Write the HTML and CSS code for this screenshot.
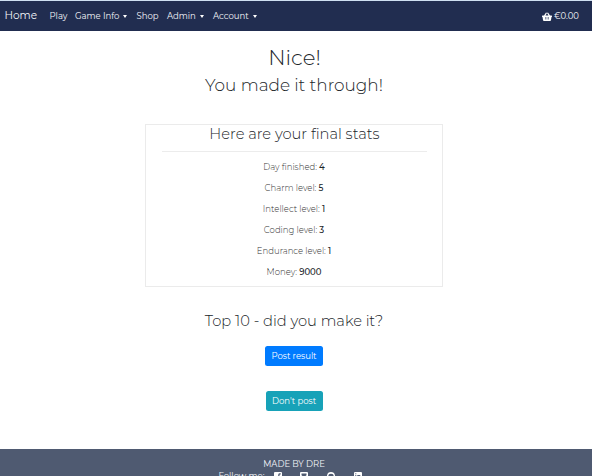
FILE: index.html
```html
<!DOCTYPE html>
<html lang="en">
<head>
<meta charset="utf-8">
<title>Final stats</title>
<link rel="stylesheet" href="styles.css">
</head>
<body>
<nav class="navbar">
  <a class="brand">Home</a>
  <a class="link play">Play</a>
  <a class="link game caret">Game Info</a>
  <a class="link shop">Shop</a>
  <a class="link admin caret">Admin</a>
  <a class="link account caret">Account</a>
  <a class="link cart"><svg class="basket" viewBox="0 0 20 18"><path fill="#fff" fill-rule="evenodd" d="M1 7h3l4-6 2 1-3 5h6l-3-5 2-1 4 6h3q1 0 1 1v1q0 1-1 1l-1 6q0 2-2 2H4q-2 0-2-2L1 10q-1 0-1-1V8q0-1 1-1zM6 10v5h1v-5zm3.500 0v5h1v-5zM13 10v5h1v-5z"/></svg><span>€0.00</span></a>
</nav>
<main class="content">
  <h1 class="title">Nice!</h1>
  <h2 class="subtitle">You made it through!</h2>
  <section class="stats">
    <h3 class="stats-title">Here are your final stats</h3>
    <hr class="rule">
    <p class="stat day">Day finished: <b>4</b></p>
    <p class="stat">Charm level: <b>5</b></p>
    <p class="stat">Intellect level: <b>1</b></p>
    <p class="stat">Coding level: <b>3</b></p>
    <p class="stat">Endurance level: <b>1</b></p>
    <p class="stat">Money: <b>9000</b></p>
  </section>
  <h3 class="top">Top 10 - did you make it?</h3>
  <button class="btn primary">Post result</button>
  <button class="btn info">Don't post</button>
</main>
<footer class="footer">
  <p class="made">MADE BY DRE</p>
  <div class="follow">
    <span>Follow me:</span>
    <svg class="social" viewBox="0 0 8 8"><path fill="#fff" fill-rule="evenodd" d="M1 0h6q1 0 1 1v6q0 1-1 1H5.500V5h1V4h-1V3q0-.6.6-.6h.6V1.300H5.500Q4.200 1.300 4.200 3v1h-1v1h1v3H1Q0 8 0 7V1q0-1 1-1z"/></svg>
    <svg class="social" viewBox="0 0 8 8"><path fill="#fff" fill-rule="evenodd" d="M1 0h6q1 0 1 1v6q0 1-1 1H1Q0 8 0 7V1q0-1 1-1zM1.500 1.600v1.600l2.500 2 2.500-2V1.600z"/></svg>
    <svg class="social" viewBox="0 0 8 8"><path fill="#fff" fill-rule="evenodd" d="M4 0a4 4 0 0 1 1.500 7.700V6.200q1.300-.4 1.300-2 0-2.500-2.800-2.500T1.200 4.200q0 1.600 1.300 2v1.500A4 4 0 0 1 4 0z"/></svg>
    <svg class="social" viewBox="0 0 8 8"><path fill="#fff" fill-rule="evenodd" d="M1 0h6q1 0 1 1v6q0 1-1 1H1Q0 8 0 7V1q0-1 1-1zM1.300 3v4h1V3zm0-1.700v1h1v-1zM3.300 3v4h1V4.200h1V7h1V3z"/></svg>
  </div>
</footer>
</body>
</html>
```
FILE: styles.css
```css
* { box-sizing: border-box; }
body {
  margin: 0;
  height: 476px;
  overflow: hidden;
  background: #fff;
  color: #212529;
  font-family: Montserrat, Inter, "Liberation Sans", sans-serif;
  font-size: 8.5px;
}
h1, h2, h3, p { margin: 0; font-weight: 300; white-space: nowrap; }
.navbar {
  display: flex;
  align-items: center;
  height: 31px;
  padding: 0 13px 0 4.5px;
  border-top: 1px solid #cfe0f2;
  background: #212d50;
  color: #f4f6fa;
  white-space: nowrap;
}
.brand { width: 45px; height: 16px; line-height: 16px; font-size: 10.5px; }
.link { display: flex; align-items: center; height: 16px; }
.play { width: 25.5px; }
.game { width: 61.5px; }
.shop { width: 30.5px; }
.admin { width: 46px; }
.caret::after {
  content: "";
  margin-left: 4px;
  border: 2.5px solid transparent;
  border-width: 3px 2.5px 0;
  border-top-color: #fff;
}
.cart { margin-left: auto; gap: 2px; }
.basket { width: 10px; height: 9px; }
.content {
  display: flex;
  flex-direction: column;
  align-items: center;
  height: 418px;
  padding-top: 12px;
}
.title { height: 28px; margin-right: 3px; line-height: 28px; font-size: 21.3px; }
.subtitle { height: 28px; margin-right: 4px; line-height: 28px; font-size: 16.9px; }
.stats {
  width: 298px;
  height: 163px;
  margin-top: 25px;
  margin-right: 4px;
  padding: 0 15px 0 16px;
  border: 1px solid #ebebeb;
  text-align: center;
}
.stats-title { height: 26px; line-height: 18px; font-size: 14.7px; }
.rule { height: 1px; margin: 0 0 5px; border: 0; background: #ececec; }
.stat { height: 21px; margin-right: 1px; line-height: 21px; color: #333; }
.stat b { font-weight: 500; color: #212529; }
.top { height: 24px; margin: 22px 4px 0 0; line-height: 24px; font-size: 14.7px; }
.btn {
  height: 20px;
  margin: 13px 4px 0 0;
  padding: 0;
  border: 0;
  border-radius: 2.5px;
  color: #fff;
  font: inherit;
}
.primary { width: 58px; background: #007bff; }
.info { width: 57px; margin-top: 25px; background: #17a2b8; }
.footer {
  height: 27px;
  padding-top: 9px;
  overflow: hidden;
  background: #4f5a71;
  color: #f4f6fa;
}
.made { height: 12px; margin-right: 4px; line-height: 12px; text-align: center; font-weight: 400; }
.follow { display: flex; padding-left: 218.5px; line-height: 12px; white-space: nowrap; }
.follow span { width: 55px; }
.social { flex: none; width: 8px; height: 8px; margin: 2px 18.700px 0 0; }
```
